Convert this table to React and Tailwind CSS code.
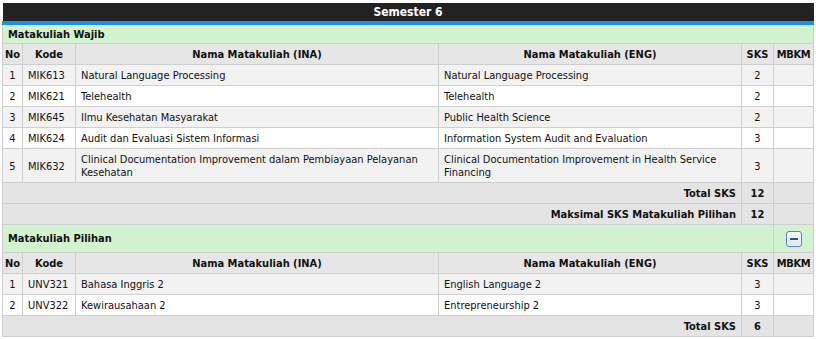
import React from 'react';

const wajib = [
  { kode: 'MIK613', ina: 'Natural Language Processing', eng: 'Natural Language Processing', sks: 2 },
  { kode: 'MIK621', ina: 'Telehealth', eng: 'Telehealth', sks: 2 },
  { kode: 'MIK645', ina: 'Ilmu Kesehatan Masyarakat', eng: 'Public Health Science', sks: 2 },
  { kode: 'MIK624', ina: 'Audit dan Evaluasi Sistem Informasi', eng: 'Information System Audit and Evaluation', sks: 3 },
  {
    kode: 'MIK632',
    ina: 'Clinical Documentation Improvement dalam Pembiayaan Pelayanan Kesehatan',
    eng: 'Clinical Documentation Improvement in Health Service Financing',
    sks: 3,
  },
];

const pilihan = [
  { kode: 'UNV321', ina: 'Bahasa Inggris 2', eng: 'English Language 2', sks: 3 },
  { kode: 'UNV322', ina: 'Kewirausahaan 2', eng: 'Entrepreneurship 2', sks: 3 },
];

const td = 'border border-[#cfcfcf] px-[5px] pt-[4px] pb-[3px] align-middle';
const th = 'border border-[#cfcfcf] px-[2px] pt-[4px] pb-[3px] font-bold text-center whitespace-nowrap';

const HeadRow = () => (
  <tr className="bg-[#e6e6e6]">
    <th className={th}>No</th>
    <th className={th}>Kode</th>
    <th className={th}>Nama Matakuliah (INA)</th>
    <th className={th}>Nama Matakuliah (ENG)</th>
    <th className={th}>SKS</th>
    <th className={`${th} tracking-[-0.3px]`}>MBKM</th>
  </tr>
);

const CourseRows = ({ items }) =>
  items.map((c, i) => (
    <tr key={c.kode} className={i % 2 === 0 ? 'bg-[#f2f2f2]' : 'bg-white'}>
      <td className={`${td} px-[2px] text-center`}>{i + 1}</td>
      <td className={td}>{c.kode}</td>
      <td className={td}>{c.ina}</td>
      <td className={td}>{c.eng}</td>
      <td className={`${td} text-center`}>{c.sks}</td>
      <td className={td}></td>
    </tr>
  ));

const SumRow = ({ label, value }) => (
  <tr className="bg-[#e4e4e4]">
    <td colSpan={4} className={`${td} text-right font-bold`}>{label}</td>
    <td className={`${td} text-center font-bold`}>{value}</td>
    <td className={td}></td>
  </tr>
);

const MinusIcon = () => (
  <span className="inline-flex h-[16px] w-[16px] items-center justify-center rounded-[3px] border border-[#5a7fd0] bg-gradient-to-b from-white to-[#d9e4fa] shadow-[inset_0_0_0_1px_#eef3ff]">
    <span className="h-[2px] w-[8px] bg-[#2c4f9e]" />
  </span>
);

export default function App() {
  return (
    <div className="min-h-screen bg-white pl-[2px] pt-[3px] text-[11px] leading-[13px] text-[#111]" style={{ fontFamily: '"DejaVu Sans Condensed", "DejaVu Sans", sans-serif' }}>
      <table className="w-[811px] table-fixed border-collapse">
        <colgroup>
          <col className="w-[20px]" />
          <col className="w-[53px]" />
          <col className="w-[363px]" />
          <col className="w-[303px]" />
          <col className="w-[32px]" />
          <col className="w-[40px]" />
        </colgroup>
        <thead>
          <tr>
            <th colSpan={6} className="border-b-4 border-[#1a8fef] bg-[#222] pt-[2px] pb-[2px] text-center text-[12px] leading-[14px] font-bold text-white">
              Semester 6
            </th>
          </tr>
        </thead>
        <tbody>
          <tr className="bg-[#d3f3d0]">
            <td colSpan={6} className="border border-[#cfcfcf] px-[5px] pt-[3px] pb-[2px] font-bold">Matakuliah Wajib</td>
          </tr>
          <HeadRow />
          <CourseRows items={wajib} />
          <SumRow label="Total SKS" value={12} />
          <SumRow label="Maksimal SKS Matakuliah Pilihan" value={12} />
          <tr className="bg-[#d3f3d0]">
            <td colSpan={5} className="border border-[#cfcfcf] px-[5px] py-[5px] font-bold">Matakuliah Pilihan</td>
            <td className="border border-[#cfcfcf] py-[5px] text-center align-middle">
              <MinusIcon />
            </td>
          </tr>
          <HeadRow />
          <CourseRows items={pilihan} />
          <SumRow label="Total SKS" value={6} />
        </tbody>
      </table>
    </div>
  );
}
